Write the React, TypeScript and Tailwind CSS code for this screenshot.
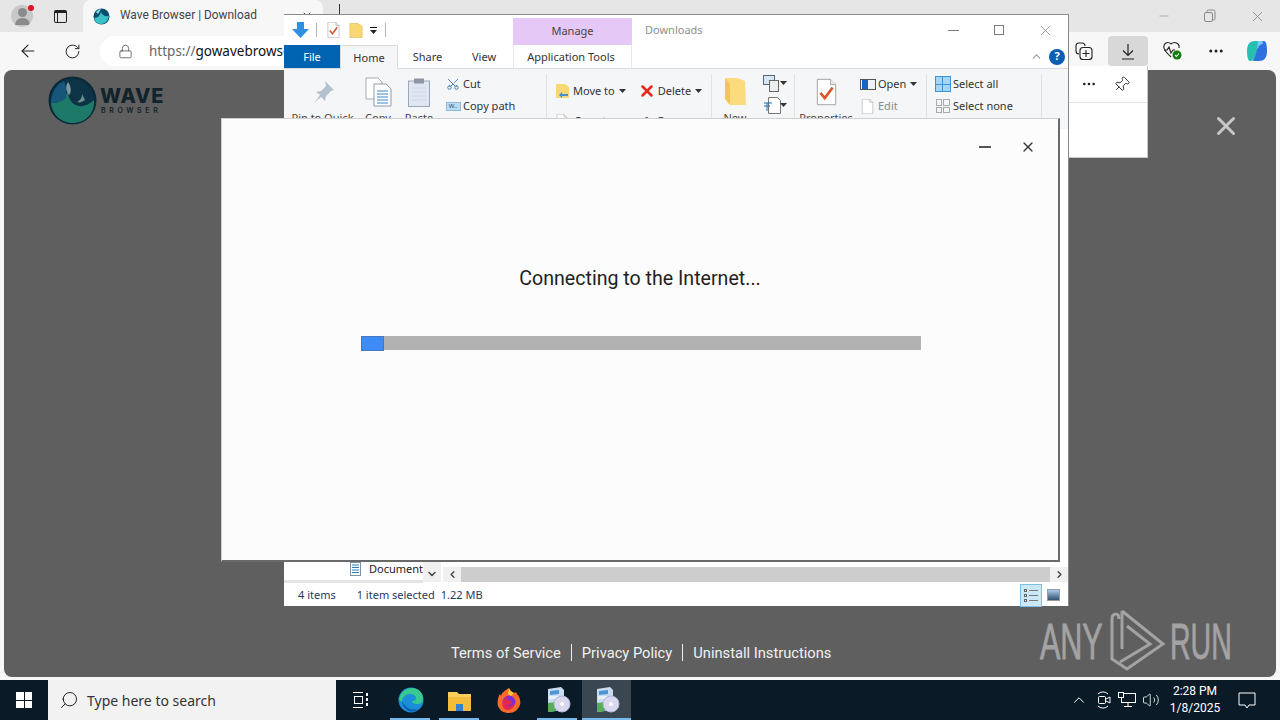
import React from "react";
import { ArrowLeft, RotateCw, Lock, MoreHorizontal, Pin, X, Minus, ChevronUp, ChevronDown, ChevronLeft, ChevronRight, Search, Volume2, Scissors } from "lucide-react";

const Caret = () => <svg width="7" height="4" viewBox="0 0 7 4" className="ml-1"><path d="M0 0h7L3.5 4z" fill="#333" /></svg>;

const Doc = ({ w = 24, h = 30, check = false }: { w?: number; h?: number; check?: boolean }) => (
  <svg width={w} height={h} viewBox="0 0 24 30">
    <path d="M1.5 .5h15l6 6v23h-21z" fill="#fff" stroke="#9a9a9a" />
    <path d="M16.5 .5v6h6" fill="#eee" stroke="#9a9a9a" />
    {check && <path d="M5 16l5 6 9-12" fill="none" stroke="#d9572b" strokeWidth="3" />}
  </svg>
);

const Folder = ({ w = 16, h = 18 }: { w?: number; h?: number }) => (
  <svg width={w} height={h} viewBox="0 0 16 18"><path d="M1 1h9l5 3v13H1z" fill="#f8d775" stroke="#e3b94e" strokeWidth=".7" /></svg>
);

const Group = ({ w, children }: { w: string; children: React.ReactNode }) => (
  <div className={`${w} h-full shrink-0 border-r border-[#e0e2e4] flex items-start`}>{children}</div>
);

const Big = ({ icon, label, w }: { icon: React.ReactNode; label: string; w: string }) => (
  <div className={`${w} flex flex-col items-center shrink-0`}>
    <div className="h-[34px] mt-[1px] flex items-center justify-center">{icon}</div>
    <div className="text-[11px] leading-[14px] mt-[2px] whitespace-nowrap text-[#444]">{label}</div>
  </div>
);

const Small = ({ icon, label, muted = false, caret = false }: { icon: React.ReactNode; label: string; muted?: boolean; caret?: boolean }) => (
  <div className="flex items-center h-[22px] whitespace-nowrap">
    <span className="w-[19px] flex justify-center shrink-0">{icon}</span>
    <span className={`ml-[1px] text-[11px] ${muted ? "text-[#8a8a8a]" : "text-[#333]"}`}>{label}</span>
    {caret && <Caret />}
  </div>
);

const Explorer = () => (
  <div className="absolute left-[284px] top-[14px] w-[785px] h-[592px] bg-white border-t border-r border-[#8a8a8a] flex flex-col font-['Noto_Sans',sans-serif] text-[#333]">
    <div className="h-[30px] flex items-start shrink-0 relative">
      <div className="h-[30px] flex items-center pl-[8px]">
        <svg width="17" height="16" viewBox="0 0 17 16"><path d="M5 0h7v7h5l-8.5 9L0 7h5z" fill="#2f8fe3" /></svg>
        <span className="w-px h-[14px] bg-[#b5b5b5] ml-[7px]" />
        <span className="ml-[10px] flex"><Doc w={13} h={16} check /></span>
        <span className="ml-[9px] flex"><Folder w={14} h={17} /></span>
        <span className="ml-[7px] flex flex-col items-center gap-[2px]"><span className="w-[7px] h-px bg-black" /><svg width="7" height="4" viewBox="0 0 7 4"><path d="M0 0h7L3.5 4z" fill="#222" /></svg></span>
        <span className="w-px h-[14px] bg-[#b5b5b5] ml-[8px]" />
      </div>
      <div className="ml-[127px] mt-[3px] w-[119px] h-[27px] bg-[#e6c8f6] flex items-center justify-center text-[11px] text-[#444]">Manage</div>
      <div className="ml-[13px] h-[30px] flex items-center text-[11px] text-[#8f8f8f]">Downloads</div>
      <div className="ml-auto flex items-center h-[30px] text-[#7a7a7a]">
        <span className="w-[45px] flex justify-center"><span className="w-[11px] h-px bg-[#7a7a7a]" /></span>
        <span className="w-[46px] flex justify-center"><span className="w-[10px] h-[10px] border border-[#7a7a7a]" /></span>
        <span className="w-[46px] flex justify-center"><X size={17} strokeWidth={1} /></span>
      </div>
    </div>
    <div className="h-[24px] flex shrink-0 items-stretch border-b border-[#dadbdc] relative text-[11px]">
      <div className="w-[56px] bg-[#0063b1] text-white flex items-center justify-center pt-[1px]">File</div>
      <div className="w-[58px] h-[24px] bg-[#f5f6f7] border-x border-t border-[#dadbdc] flex items-center justify-center pt-[1px]">Home</div>
      <div className="w-[59px] flex items-center justify-center pt-[1px]">Share</div>
      <div className="w-[54px] flex items-center justify-center pt-[1px]">View</div>
      <div className="ml-[2px] w-[119px] flex items-center justify-center border-x border-[#e8e8e8] pt-[1px] pr-[3px]">Application Tools</div>
      <div className="ml-auto flex items-center pr-[3px] gap-[6px]">
        <ChevronUp size={13} className="text-[#999]" />
        <span className="w-[16px] h-[16px] rounded-full bg-[#0a5fb4] text-white text-[11px] font-bold flex items-center justify-center">?</span>
      </div>
    </div>
    <div className="h-[60px] shrink-0 bg-[#f5f6f7] flex pt-[5px] overflow-hidden">
      <Group w="w-[263px]">
        <div className="flex">
          <Big w="w-[77px]" label="Pin to Quick" icon={<svg width="24" height="24" viewBox="0 0 24 24"><path d="M14 1l9 9-3 1-5 5-1 5-4-4-7 6 6-8-4-3 5-1 5-5z" fill="#b6c1cf" /></svg>} />
          <Big w="w-[34px]" label="Copy" icon={<svg width="27" height="30" viewBox="0 0 27 30"><path d="M1 1h12l4 4v17H1z" fill="#fff" stroke="#aaa" /><path d="M9 7h12l5 5v17H9z" fill="#fff" stroke="#8b9bb0" /><path d="M12 14h11M12 17h11M12 20h11M12 23h11M12 26h11" stroke="#3c83c9" /></svg>} />
          <Big w="w-[48px]" label="Paste" icon={<svg width="22" height="29" viewBox="0 0 22 29"><rect x=".5" y="3" width="21" height="25.5" fill="#e1e7f2" stroke="#9aa7ba" /><rect x="6" y=".5" width="10" height="5" fill="#8d96a3" /><path d="M4 10h14M4 14h14M4 18h14M4 22h14" stroke="#cfd7e3" /></svg>} />
        </div>
        <div className="flex flex-col -mt-[1px]">
          <div className="flex items-center h-[22px] whitespace-nowrap"><span className="w-[20px] flex justify-center shrink-0"><Scissors size={14} className="text-[#2b6cb0] -rotate-90" strokeWidth={1.4} /></span><span className="text-[11px] text-[#333]">Cut</span></div>
          <div className="flex items-center h-[22px] whitespace-nowrap"><span className="w-[20px] flex justify-center shrink-0"><span className="w-[15px] h-[9px] bg-[#bcdcf5] border border-[#8fb9da] text-[6px] leading-[7px] text-[#1b4f80] text-center">W..</span></span><span className="text-[11px] text-[#333]">Copy path</span></div>
        </div>
      </Group>
      <Group w="w-[165px]">
        <div className="flex pl-[9px] pt-[7px] gap-[11px]">
          <div className="flex flex-col gap-[10px]">
            <div className="flex items-center h-[20px] text-[11px] whitespace-nowrap"><svg width="13" height="16" viewBox="0 0 13 16"><path d="M0 1h9l4 3v11H0z" fill="#f8d775" /><path d="M12 11H6v-2l-3 3 3 3v-2h6z" fill="#4a8fd1" /></svg><span className="ml-[4px]">Move to</span><Caret /></div>
            <div className="flex items-center h-[20px] text-[11px] whitespace-nowrap"><Doc w={12} h={14} /><span className="ml-[6px]">Copy to</span></div>
          </div>
          <div className="flex flex-col gap-[10px] ml-[1px]">
            <div className="flex items-center h-[20px] text-[11px] whitespace-nowrap"><X size={18} strokeWidth={3.4} className="text-[#e32b20]" /><span className="ml-[2px]">Delete</span><Caret /></div>
            <div className="flex items-center h-[20px] text-[11px] whitespace-nowrap"><span className="w-[18px] flex justify-center text-[#555]">I</span><span className="ml-[2px]">Rename</span></div>
          </div>
        </div>
      </Group>
      <Group w="w-[83px]">
        <div className="flex pl-[10px]">
          <Big w="w-[26px]" label="New" icon={<svg width="21" height="28" viewBox="0 0 21 28"><path d="M0 0h12l8 3 1 24H5L0 21z" fill="#fcdb7e" /><path d="M0 0l5 6v21L0 21z" fill="#f3c65a" /></svg>} />
          <div className="flex flex-col ml-[15px] -mt-[2px]">
            <div className="flex items-center h-[22px]"><svg width="19" height="17" viewBox="0 0 19 17"><rect x=".5" y=".5" width="11" height="9" fill="#d7e6f5" stroke="#567" /><rect x="6.5" y="5.5" width="9" height="11" fill="#eee" stroke="#666" /></svg><span className="-ml-[6px] flex"><Caret /></span></div>
            <div className="flex items-center h-[22px]"><svg width="19" height="17" viewBox="0 0 19 17"><path d="M5.5 .5h9l3 3v13h-12z" fill="#fff" stroke="#777" /><path d="M1 6h8M4 6v8M1 9h6" stroke="#1e6fb8" /></svg><span className="-ml-[6px] flex"><Caret /></span></div>
          </div>
        </div>
      </Group>
      <Group w="w-[132px]">
        <div className="flex">
          <Big w="w-[62px]" label="Properties" icon={<Doc w={21} h={28} check />} />
          <div className="flex flex-col ml-[1px] -mt-[1px]">
            <Small label="Open" caret icon={<span className="w-[16px] h-[11px] bg-[#eef3fa] border border-[#555] flex pl-[1px]"><span className="w-[6px] bg-[#1565c0]" /></span>} />
            <Small label="Edit" muted icon={<Doc w={13} h={15} />} />
          </div>
        </div>
      </Group>
      <Group w="w-[115px]">
        <div className="flex flex-col pl-[6px] -mt-[1px]">
          <Small label="Select all" icon={<span className="w-[16px] h-[16px] grid grid-cols-2 gap-px bg-[#3b93d8] p-px"><span className="bg-[#a6d5f7]" /><span className="bg-[#a6d5f7]" /><span className="bg-[#a6d5f7]" /><span className="bg-[#a6d5f7]" /></span>} />
          <Small label="Select none" icon={<span className="w-[14px] h-[14px] grid grid-cols-2 gap-px"><span className="border border-[#aaa]" /><span className="border border-[#aaa]" /><span className="border border-[#aaa]" /><span className="border border-[#aaa]" /></span>} />
        </div>
      </Group>
    </div>
    <div className="flex-1 min-h-0 flex flex-col justify-end">
      <div className="h-[21px] flex items-start shrink-0 text-[11px] relative">
        <div className="w-[139px] h-full flex items-start pl-[66px] overflow-hidden whitespace-nowrap text-[#222] border-b-[3px] border-[#e4e4e4] leading-[13px]">
          <svg width="11" height="14" viewBox="0 0 11 14" className="shrink-0 mr-[8px]"><rect x=".5" y=".5" width="10" height="13" fill="#fff" stroke="#7d93aa" /><path d="M2 3h7M2 5.5h7M2 8h7M2 10.5h7" stroke="#2e7fbe" /></svg>Document
        </div>
        <div className="w-[18px] h-[20px] bg-[#f0f0f0] flex items-end justify-center pb-[2px]"><ChevronDown size={12} strokeWidth={3} className="text-[#444]" /></div>
        <div className="ml-[2px] flex-1 flex items-center h-[15px] mt-[5px] bg-[#cdcdcd]">
          <div className="w-[18px] h-full bg-[#f0f0f0] flex items-center justify-center"><ChevronLeft size={11} strokeWidth={3} className="text-[#444]" /></div>
          <div className="flex-1" />
          <div className="w-[18px] h-full bg-[#f0f0f0] flex items-center justify-center"><ChevronRight size={11} strokeWidth={3} className="text-[#444]" /></div>
        </div>
      </div>
      <div className="h-[23px] shrink-0 flex items-center text-[11px] text-[#1f3a5f] relative pt-[1px]">
        <span className="ml-[14px]">4 items</span>
        <span className="ml-[21px]">1 item selected</span>
        <span className="ml-[6px]">1.22 MB</span>
        <div className="ml-auto h-full flex items-center pr-[8px] gap-[5px]">
          <div className="w-[22px] h-[23px] bg-[#cbe8f6] border border-[#7fbfe0] flex flex-col justify-center gap-[2px] px-[3px]">
            <span className="flex items-center gap-[2px]"><span className="w-[3px] h-[3px] border border-[#666]" /><span className="flex-1 h-px bg-[#777]" /></span>
            <span className="flex items-center gap-[2px]"><span className="w-[3px] h-[3px] border border-[#666]" /><span className="flex-1 h-px bg-[#777]" /></span>
            <span className="flex items-center gap-[2px]"><span className="w-[3px] h-[3px] border border-[#666]" /><span className="flex-1 h-px bg-[#777]" /></span>
          </div>
          <div className="w-[13px] h-[12px] border border-[#999] bg-gradient-to-b from-[#a8cdf0] to-[#37536e]" />
        </div>
      </div>
    </div>
  </div>
);

const Installer = () => (
  <div className="absolute left-[221px] top-[118px] w-[839px] h-[444px] bg-[#fcfcfc] border-t border-l border-[#d0d0d0] border-r-2 border-b-2 border-r-[#6a6a6a] border-b-[#6a6a6a] flex flex-col font-['Noto_Sans',sans-serif]">
    <div className="h-[56px] flex items-center justify-end shrink-0 pr-[22px] gap-[29px] text-[#333]">
      <span className="w-[12px] h-[2px] bg-[#555]" />
      <X size={16} strokeWidth={2} />
    </div>
    <div className="mt-[86px] text-center font-['Roboto',sans-serif] text-[19.6px] leading-[36px] text-[#222] shrink-0">Connecting to the Internet...</div>
    <div className="mt-[39px] ml-[139px] w-[560px] h-[14px] bg-[#b2b2b2] shrink-0">
      <div className="w-[23px] h-[15px] bg-[#3f8bf5] border border-[#4a78c0]" />
    </div>
  </div>
);

const Logo = () => (
  <div className="flex items-center">
    <svg width="49" height="49" viewBox="0 0 49 49" className="shrink-0">
      <circle cx="24.5" cy="24.5" r="24" fill="#0a2a3a" />
      <circle cx="24.5" cy="24.5" r="21.5" fill="#0c3346" />
      <path d="M3 27c8 1 14-5 17-12 0 9 5 14 11 15 5 1 10-2 15-6 1 14-9 23-21.5 23C13 47 4 38 3 27z" fill="#1e7a68" />
      <path d="M16 5c3 6 2 13 2 17-3 3-8 5-15 5C3 17 8 8 16 5z" fill="#17567a" />
      <path d="M20 6c-3 5-2 9 1 13 3-3 2-9-1-13z" fill="#7f97a0" />
      <path d="M37 24c-3 2-5 3-8 2 4-2 5-5 5-8 1 2 2 4 3 6z" fill="#6f8f90" />
    </svg>
    <div className="ml-[3px] flex flex-col font-['Inter',sans-serif] text-[#12232c] -mt-[1px]">
      <div className="text-[20px] leading-[20px] font-extrabold tracking-[0.04em] whitespace-nowrap">WAVE</div>
      <div className="text-[7px] leading-[8px] ml-[1px] mt-[1px] font-semibold tracking-[0.52em] whitespace-nowrap">BROWSER</div>
    </div>
  </div>
);

const Footer = () => (
  <div className="flex items-center font-['Roboto',sans-serif] text-[14.7px] text-[#f1f1f1] whitespace-nowrap">
    <span>Terms of Service</span>
    <span className="w-px h-[17px] bg-[#eee] mx-[10px]" />
    <span>Privacy Policy</span>
    <span className="w-px h-[17px] bg-[#eee] mx-[10px]" />
    <span>Uninstall Instructions</span>
  </div>
);

const AnyRun = () => (
  <div className="flex items-center text-[#a3a3a3] font-['Liberation_Sans',sans-serif] text-[50px] leading-none [-webkit-text-stroke:0.8px_#a3a3a3]">
    <span className="w-[63px] pt-[3px] scale-x-[0.61] origin-left whitespace-nowrap">ANY</span>
    <svg width="60" height="66" viewBox="0 0 60 66" className="ml-[5px] mr-[2px] shrink-0" fill="none" stroke="#a3a3a3" strokeWidth="3">
      <path d="M14 4L55 37L19 62L4 52V12Q4 7 8 7Q11 7 11 12" />
      <path d="M14 4V42" />
      <path d="M19 19L42 37L12 55" />
    </svg>
    <span className="w-[61px] pt-[3px] scale-x-[0.57] origin-left whitespace-nowrap">RUN</span>
  </div>
);

const Underline = ({ children, active = false, on = true }: { children: React.ReactNode; active?: boolean; on?: boolean }) => (
  <div className={`w-[49px] h-full flex items-center justify-center relative shrink-0 ${active ? "bg-[#3a4750]" : ""}`}>
    {children}
    {on && <span className={`absolute bottom-0 h-[2px] bg-[#76b9ed] ${active ? "left-0 right-0" : "left-[4px] right-[5px]"}`} />}
  </div>
);

const Setup = () => (
  <svg width="26" height="28" viewBox="0 0 26 28">
    <path d="M3 3l13-2 3 3v20l-16 2z" fill="#c9dcf0" />
    <path d="M5 5l9-1v4l-9 1z" fill="#4f94d4" />
    <path d="M4 10h10v3H4z" fill="#e8f0f8" />
    <path d="M3 17l8-1v9l-8 1z" fill="#58ad58" />
    <circle cx="17" cy="18" r="8" fill="#d8d8ee" stroke="#b5b5d8" />
    <circle cx="17" cy="18" r="2" fill="#fff" />
  </svg>
);

export default function App() {
  return (
    <div className="w-[1280px] h-[720px] relative overflow-hidden bg-[#f7f7f7] flex flex-col font-['Noto_Sans',sans-serif]">
      <div className="h-[32px] shrink-0 bg-[#e6e6e6] flex items-start">
        <div className="w-[44px] h-[32px] flex items-center justify-center relative">
          <span className="w-[22px] h-[22px] rounded-full bg-[#c8c8c8] flex flex-col items-center justify-center overflow-hidden">
            <span className="w-[9px] h-[9px] rounded-full bg-[#8a8a8a]" />
            <span className="w-[15px] h-[7px] rounded-t-full bg-[#8a8a8a] mt-[1px]" />
          </span>
          <span className="absolute left-[28px] top-[5px] w-[6px] h-[6px] rounded-full bg-[#e0121f]" />
        </div>
        <div className="w-[32px] h-[32px] mr-[7px] flex items-center justify-center">
          <span className="w-[13px] h-[13px] rounded-[2px] border-[1.5px] border-t-[3px] border-[#222] flex"><span className="w-[3px] border-r border-[#222]" /></span>
        </div>
        <div className="w-[240px] h-[32px] bg-[#f7f7f7] rounded-t-[8px] flex items-center pl-[10px]">
          <svg width="17" height="17" viewBox="0 0 17 17" className="shrink-0"><circle cx="8.5" cy="8.5" r="8" fill="#0a4e6e" /><path d="M1 10c4 0 6-3 7-6 1 3 4 5 8 4-1 5-4 8-8 8-4 0-6-3-7-6z" fill="#3cc0c8" /><path d="M3 4c2-2 3-3 5-3l-3 5z" fill="#7fe0e8" /></svg>
          <span className="ml-[10px] font-['Roboto',sans-serif] text-[11.9px] text-[#444] whitespace-nowrap">Wave Browser | Download</span>
          <X size={12} className="ml-auto mr-[10px] text-[#555]" />
        </div>
        <span className="ml-[16px] mt-[4px] w-px h-[18px] bg-[#333]" />
        <div className="ml-auto h-[32px] flex items-center pr-[14px] gap-[32px] text-[#888]">
          <Minus size={14} strokeWidth={1} />
          <svg width="14" height="14" viewBox="0 0 14 14" fill="none" stroke="#888"><rect x="1.5" y="3.5" width="8" height="9" rx="1.5" /><path d="M4 3V2.5a1.5 1.5 0 011.5-1.5h5A1.5 1.5 0 0112 2.5v7A1.5 1.5 0 0110.5 11H10" /></svg>
          <X size={17} strokeWidth={1.2} />
        </div>
      </div>
      <div className="h-[38px] shrink-0 bg-[#f7f7f7] flex items-center relative">
        <ArrowLeft size={20} strokeWidth={1.3} className="ml-[18px] text-[#222]" />
        <RotateCw size={17} strokeWidth={1.4} className="ml-[26px] text-[#222]" />
        <div className="ml-[19px] w-[220px] h-[30px] bg-white rounded-l-full flex items-center pl-[18px] overflow-hidden">
          <Lock size={15} strokeWidth={1.3} className="text-[#555] shrink-0" />
          <span className="ml-[16px] text-[13.5px] whitespace-nowrap"><span className="text-[#666]">https://</span><span className="text-[#111]">gowavebrowser</span></span>
        </div>
        <div className="ml-auto flex items-center pr-[10px] h-full">
          <svg width="18" height="18" viewBox="0 0 18 18" fill="none" stroke="#222" strokeWidth="1.1" className="mr-[15px]"><path d="M4 12a3 3 0 01-3-3V4a3 3 0 013-3h3a3 3 0 013 3" /><rect x="5" y="5.5" width="12" height="12" rx="3" fill="#f7f7f7" /><path d="M11 8v7M7.5 11.5h7" /></svg>
          <div className="w-[40px] h-[30px] bg-[#d8d8d8] rounded-[4px] flex items-center justify-center">
            <svg width="14" height="17" viewBox="0 0 14 17" fill="none" stroke="#222" strokeWidth="1.2"><path d="M7 1v11M2 7.5L7 12.5L12 7.5M1 16h12" /></svg>
          </div>
          <svg width="20" height="20" viewBox="0 0 20 20" fill="none" stroke="#222" strokeWidth="1.1" className="ml-[14px]"><path d="M9 3C6 0 1 2 2 7c.5 3 4 6 7 9M9 3c3-3 9-1 8 4" /><path d="M2 9h3l2-3 2 6 2-3h2" /><circle cx="15" cy="14" r="4.5" fill="#107c10" stroke="none" /><path d="M13 14l1.5 1.5 2.5-3" stroke="#fff" /></svg>
          <MoreHorizontal size={18} strokeWidth={2} className="ml-[25px] text-[#222]" />
          <svg width="26" height="26" viewBox="0 0 26 26" className="ml-[19px]">
            <path d="M3 13C3 6 6 3 11 3h6l-2 6-3 9c-1 3-3 5-6 5-2 0-3-4-3-10z" fill="#27c0b0" />
            <path d="M23 13c0 7-3 10-8 10H9l2-4 3-10c1-3 3-6 6-6 2 0 3 4 3 10z" fill="#2f6fe0" />
            <path d="M14 3h4l1 3c-2 0-4 1-5 4l-1 1z" fill="#7fc8ff" />
          </svg>
        </div>
      </div>
      <div className="flex-1 min-h-0 mx-[4px] mb-[3px] rounded-[8px] bg-[#5f5f5f] flex flex-col relative">
        <div className="pl-[44px] pt-[6px]"><Logo /></div>
        <div className="mt-auto flex items-end justify-between pb-[4px]">
          <div className="ml-[447px] mb-[9px]"><Footer /></div>
          <div className="mr-[45px]"><AnyRun /></div>
        </div>
        <X size={30} strokeWidth={2.4} className="absolute right-[35px] top-[41px] text-[#c8c8c8]" />
      </div>
      <div className="h-[40px] shrink-0 bg-[#0a1b27] flex items-center">
        <div className="w-[48px] h-full flex items-center justify-center">
          <div className="w-[16px] h-[16px] grid grid-cols-2 gap-[1px]"><span className="bg-white" /><span className="bg-white" /><span className="bg-white" /><span className="bg-white" /></div>
        </div>
        <div className="w-[288px] h-full bg-[#f2f2f2] flex items-center pl-[11px]">
          <Search size={20} strokeWidth={1.2} className="text-[#222] -scale-x-100" />
          <span className="ml-[8px] text-[14px] text-[#333]">Type here to search</span>
        </div>
        <div className="w-[48px] h-full flex items-center justify-center">
          <svg width="18" height="16" viewBox="0 0 18 16" fill="none" stroke="#fff"><path d="M2 .5h10M2 15.5h10" /><rect x="3.5" y="4.5" width="8" height="7" /><rect x="15" y="1" width="2" height="3" fill="#fff" stroke="none" /><rect x="15" y="6" width="2" height="3" fill="#fff" stroke="none" /><rect x="15" y="11" width="2" height="3" fill="#fff" stroke="none" /></svg>
        </div>
        <div className="ml-[2px] flex h-full">
          <Underline>
            <svg width="26" height="26" viewBox="0 0 26 26"><circle cx="13" cy="13" r="12.5" fill="#1a8fd8" /><path d="M1 13C2 5 8 1 14 1c6 0 11 4 11 11 0 4-3 5-6 5-3 0-5-1-5-3 3 0 4-1 4-3 0-2-3-4-6-4-5 0-8 4-8 8z" fill="#37c98f" /><path d="M8 19c3 4 8 4 12 3-3 3-6 3-9 2-3-1-7-5-7-10 1 2 2 4 4 5z" fill="#0d5fb0" /></svg>
          </Underline>
          <Underline>
            <svg width="23" height="21" viewBox="0 0 23 21"><path d="M0 2h9l2 2h12v17H0z" fill="#f9cf5c" /><path d="M0 7h23v14H0z" fill="#f4bc38" /><rect x="8" y="14" width="7" height="7" fill="#2f87c9" /></svg>
          </Underline>
          <Underline on={false}>
            <svg width="24" height="25" viewBox="0 0 24 25"><path d="M12 0c1 3 3 4 5 5 2-1 3 0 3 1 3 3 4 8 3 11-2 5-6 8-11 8S3 23 1 18C0 14 1 9 3 6l1 2c1-4 5-6 8-8z" fill="#ff6a2a" /><path d="M12 0c1 3 3 4 5 5l-3 3-3-2z" fill="#ffc93a" /><circle cx="12" cy="14" r="6.5" fill="#7b2fd0" /><path d="M6 12c1-2 3-3 5-3l-1 3c3 0 5 1 5 3-1 2-4 3-7 2 3 2 7 2 9-2 0 5-3 7-6 7-4 0-7-4-5-10z" fill="#e22850" /></svg>
          </Underline>
          <Underline><Setup /></Underline>
          <Underline active><Setup /></Underline>
        </div>
        <div className="ml-auto flex items-center h-full text-white">
          <ChevronUp size={18} strokeWidth={1.3} />
          <svg width="16" height="18" viewBox="0 0 16 18" fill="none" stroke="#fff" className="ml-[8px]"><path d="M2 3a7 7 0 0110 0M2 15a7 7 0 0010 0" /><rect x="2.5" y="5.5" width="7" height="7" rx="1" /><path d="M10 8l4-2v6l-4-2" /></svg>
          <svg width="18" height="16" viewBox="0 0 18 16" fill="none" stroke="#fff" className="ml-[6px]"><rect x="3.5" y="1.5" width="14" height="9" /><path d="M10 11v3M6 14.5h8" /><rect x=".5" y=".5" width="5" height="5" fill="#0a1b27" /></svg>
          <Volume2 size={18} strokeWidth={1.1} className="ml-[6px]" />
          <div className="w-[70px] flex flex-col items-center font-['Roboto',sans-serif] text-[12px] leading-[17px]">
            <span>2:28 PM</span>
            <span>1/8/2025</span>
          </div>
          <svg width="18" height="17" viewBox="0 0 18 17" fill="none" stroke="#fff" className="ml-[8px] mr-[24px]"><path d="M1 1h16v12h-6l-2 3-2-3H1z" /></svg>
        </div>
      </div>

      <Explorer />
      <div className="absolute left-[1069px] top-[66px] w-[79px] h-[92px] bg-white border-r border-b border-[#c8c8c8]">
        <div className="h-[37px] border-b border-[#e4e4e4] flex items-center">
          <MoreHorizontal size={16} strokeWidth={2} className="ml-[12px] text-[#222]" />
          <Pin size={17} strokeWidth={1.2} className="ml-[16px] text-[#222] rotate-45" />
        </div>
      </div>
      <Installer />
    </div>
  );
}
